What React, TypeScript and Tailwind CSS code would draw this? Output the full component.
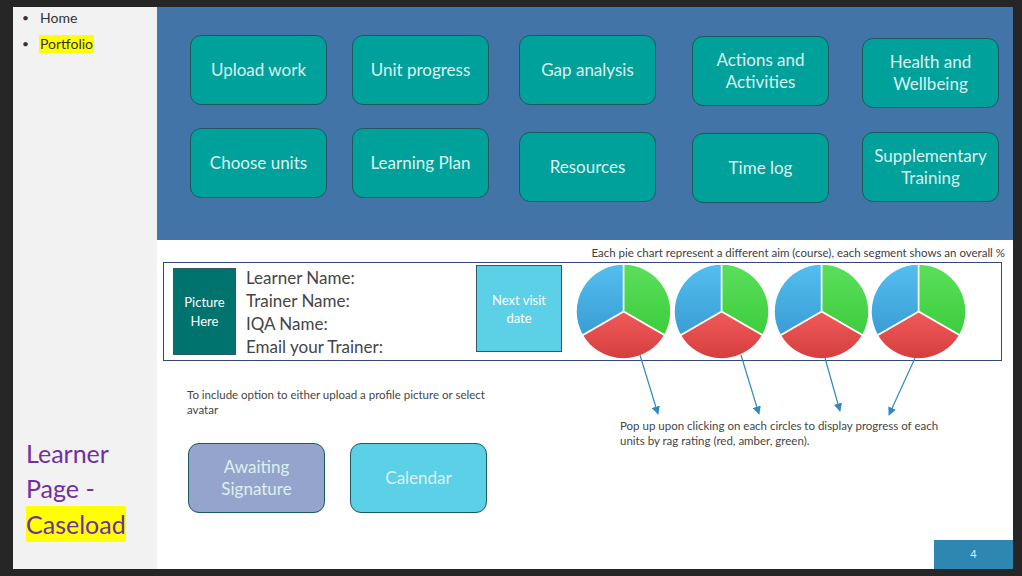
import type { ReactNode } from "react";

const font = { fontFamily: "Lato, 'Open Sans', sans-serif" };

type Col = { ml: string; top: string; gap: string; items: ReactNode[] };

const columns: Col[] = [
  { ml: "ml-[33px]", top: "mt-[28px]", gap: "mt-[23px]", items: ["Upload work", "Choose units"] },
  { ml: "ml-[25px]", top: "mt-[28px]", gap: "mt-[23px]", items: ["Unit progress", "Learning Plan"] },
  { ml: "ml-[30px]", top: "mt-[28px]", gap: "mt-[27px]", items: ["Gap analysis", "Resources"] },
  {
    ml: "ml-[36px]",
    top: "mt-[29px]",
    gap: "mt-[27px]",
    items: [
      <>
        Actions and
        <br />
        Activities
      </>,
      "Time log",
    ],
  },
  {
    ml: "ml-[33px]",
    top: "mt-[31px]",
    gap: "mt-[24px]",
    items: [
      <>
        Health and
        <br />
        Wellbeing
      </>,
      <>
        Supplementary
        <br />
        Training
      </>,
    ],
  },
];

function Tile({ children, className }: { children: ReactNode; className?: string }) {
  return (
    <div
      className={`flex h-[70px] w-[137px] items-center justify-center rounded-[11px] border border-[#1c5a5e] bg-[#00a19b] text-center text-[17px] leading-[22px] text-[#dcf1ef] ${className ?? ""}`}
    >
      {children}
    </div>
  );
}

function Pies() {
  const r = 47.5;
  const dx = r * Math.cos(Math.PI / 6);
  const dy = r * Math.sin(Math.PI / 6);
  const centers = [47.5, 145.5, 245.5, 342.5];
  const cy = 47.5;

  return (
    <svg width="391" height="96" viewBox="0 0 391 96">
      <defs>
        <linearGradient id="gBlue" x1="0" y1="0" x2="0" y2="1">
          <stop offset="0" stopColor="#55bef0" />
          <stop offset="1" stopColor="#389dd4" />
        </linearGradient>
        <linearGradient id="gGreen" x1="0" y1="0" x2="0" y2="1">
          <stop offset="0" stopColor="#5cdf5c" />
          <stop offset="1" stopColor="#3ccd3c" />
        </linearGradient>
        <linearGradient id="gRed" x1="0" y1="0" x2="0" y2="1">
          <stop offset="0" stopColor="#f05a5a" />
          <stop offset="1" stopColor="#d63e3e" />
        </linearGradient>
      </defs>
      {centers.map((cx) => {
        const top = `${cx} ${cy - r}`;
        const right = `${cx + dx} ${cy + dy}`;
        const left = `${cx - dx} ${cy + dy}`;
        return (
          <g key={cx} stroke="#ffffff" strokeWidth="1.5" strokeLinejoin="round">
            <path d={`M${cx} ${cy} L${top} A${r} ${r} 0 0 1 ${right} Z`} fill="url(#gGreen)" />
            <path d={`M${cx} ${cy} L${right} A${r} ${r} 0 0 1 ${left} Z`} fill="url(#gRed)" />
            <path d={`M${cx} ${cy} L${left} A${r} ${r} 0 0 1 ${top} Z`} fill="url(#gBlue)" />
          </g>
        );
      })}
    </svg>
  );
}

function Arrows() {
  const lines = [
    [640, 355, 658, 414],
    [741, 355, 759, 414],
    [825, 358, 840, 411],
    [915, 358, 889, 415],
  ];
  return (
    <svg
      className="pointer-events-none absolute left-0 top-0"
      width="1022"
      height="576"
      viewBox="0 0 1022 576"
    >
      <defs>
        <marker id="head" viewBox="0 0 10 10" refX="9" refY="5" markerWidth="7" markerHeight="7" orient="auto">
          <path d="M0 0 L10 5 L0 10 Z" fill="#2e89bf" />
        </marker>
      </defs>
      {lines.map(([x1, y1, x2, y2]) => (
        <line
          key={x1}
          x1={x1}
          y1={y1}
          x2={x2}
          y2={y2}
          stroke="#2e89bf"
          strokeWidth="1.2"
          markerEnd="url(#head)"
        />
      ))}
    </svg>
  );
}

export default function App() {
  return (
    <div className="relative h-[576px] w-[1022px] overflow-hidden bg-[#262626] pl-[13px] pt-[7px]" style={font}>
      <div className="flex h-[562px] w-[1000px]">
        {/* sidebar */}
        <div className="flex w-[144px] flex-col bg-[#f2f2f2] pl-[9px]">
          <ul className="-mt-[2px] text-[14px] leading-[26px] text-[#333333]">
            <li className="flex items-center">
              <span className="w-[18px] text-[12px]">•</span>
              <span>Home</span>
            </li>
            <li className="flex items-center">
              <span className="w-[17px] text-[12px]">•</span>
              <span className="bg-[#ffff00] px-[1px] leading-[18px]">Portfolio</span>
            </li>
          </ul>
          <div className="mt-auto mb-[27px] pl-[4px] text-[25px] leading-[35px] text-[#7030a0]">
            Learner
            <br />
            Page -
            <br />
            <span className="inline-block bg-[#ffff00] leading-[36px]">Caseload</span>
          </div>
        </div>

        {/* main */}
        <div className="flex flex-1 flex-col bg-white">
          <div className="flex h-[233px] bg-[#4374a8]">
            {columns.map((col, i) => (
              <div key={i} className={`flex flex-col ${col.ml}`}>
                <Tile className={col.top}>{col.items[0]}</Tile>
                <Tile className={col.gap}>{col.items[1]}</Tile>
              </div>
            ))}
          </div>

          <div className="flex flex-1 flex-col">
            <p className="mt-[5px] pr-[8px] text-right text-[11.5px] leading-[16px] text-[#404040]">
              Each pie chart represent a different aim (course), each segment shows an overall %
            </p>

            <div className="ml-[6px] mt-[1px] flex h-[99px] w-[839px] items-start border border-[#34487a]">
              <div className="ml-[9px] mt-[5px] flex h-[87px] w-[63px] items-center justify-center border border-[#2c5c63] bg-[#00736e] text-center text-[13px] leading-[19px] text-white">
                Picture
                <br />
                Here
              </div>
              <div className="ml-[10px] mt-[3px] w-[230px] text-[17px] leading-[23px] text-[#454545]">
                <p>Learner Name:</p>
                <p>Trainer Name:</p>
                <p>IQA Name:</p>
                <p>Email your Trainer:</p>
              </div>
              <div className="mt-[2px] flex h-[87px] w-[86px] items-center justify-center border border-[#2c5c63] bg-[#5bd0e6] text-center text-[13px] leading-[18px] text-white">
                Next visit
                <br />
                date
              </div>
              <div className="ml-[14px] mt-[1px]">
                <Pies />
              </div>
            </div>

            <div className="flex">
              <div className="ml-[30px] mt-[26px] w-[400px]">
                <p className="text-[11.5px] leading-[15px] text-[#454545]">
                  To include option to either upload a profile picture or select
                  <br />
                  avatar
                </p>
                <div className="mt-[26px] flex gap-[25px] pl-[1px]">
                  <Tile className="bg-[#95a4cc]">
                    Awaiting
                    <br />
                    Signature
                  </Tile>
                  <Tile className="bg-[#5bd0e6]">Calendar</Tile>
                </div>
              </div>
              <p className="ml-[33px] pt-[57px] text-[11.5px] leading-[15px] text-[#454545]">
                Pop up upon clicking on each circles to display progress of each
                <br />
                units by rag rating (red, amber, green).
              </p>
            </div>

            <div className="mt-auto flex h-[29px] w-[79px] items-center justify-center self-end bg-[#2d87b1] text-[11px] text-[#dceef6]">
              4
            </div>
          </div>
        </div>
      </div>
      <Arrows />
    </div>
  );
}
